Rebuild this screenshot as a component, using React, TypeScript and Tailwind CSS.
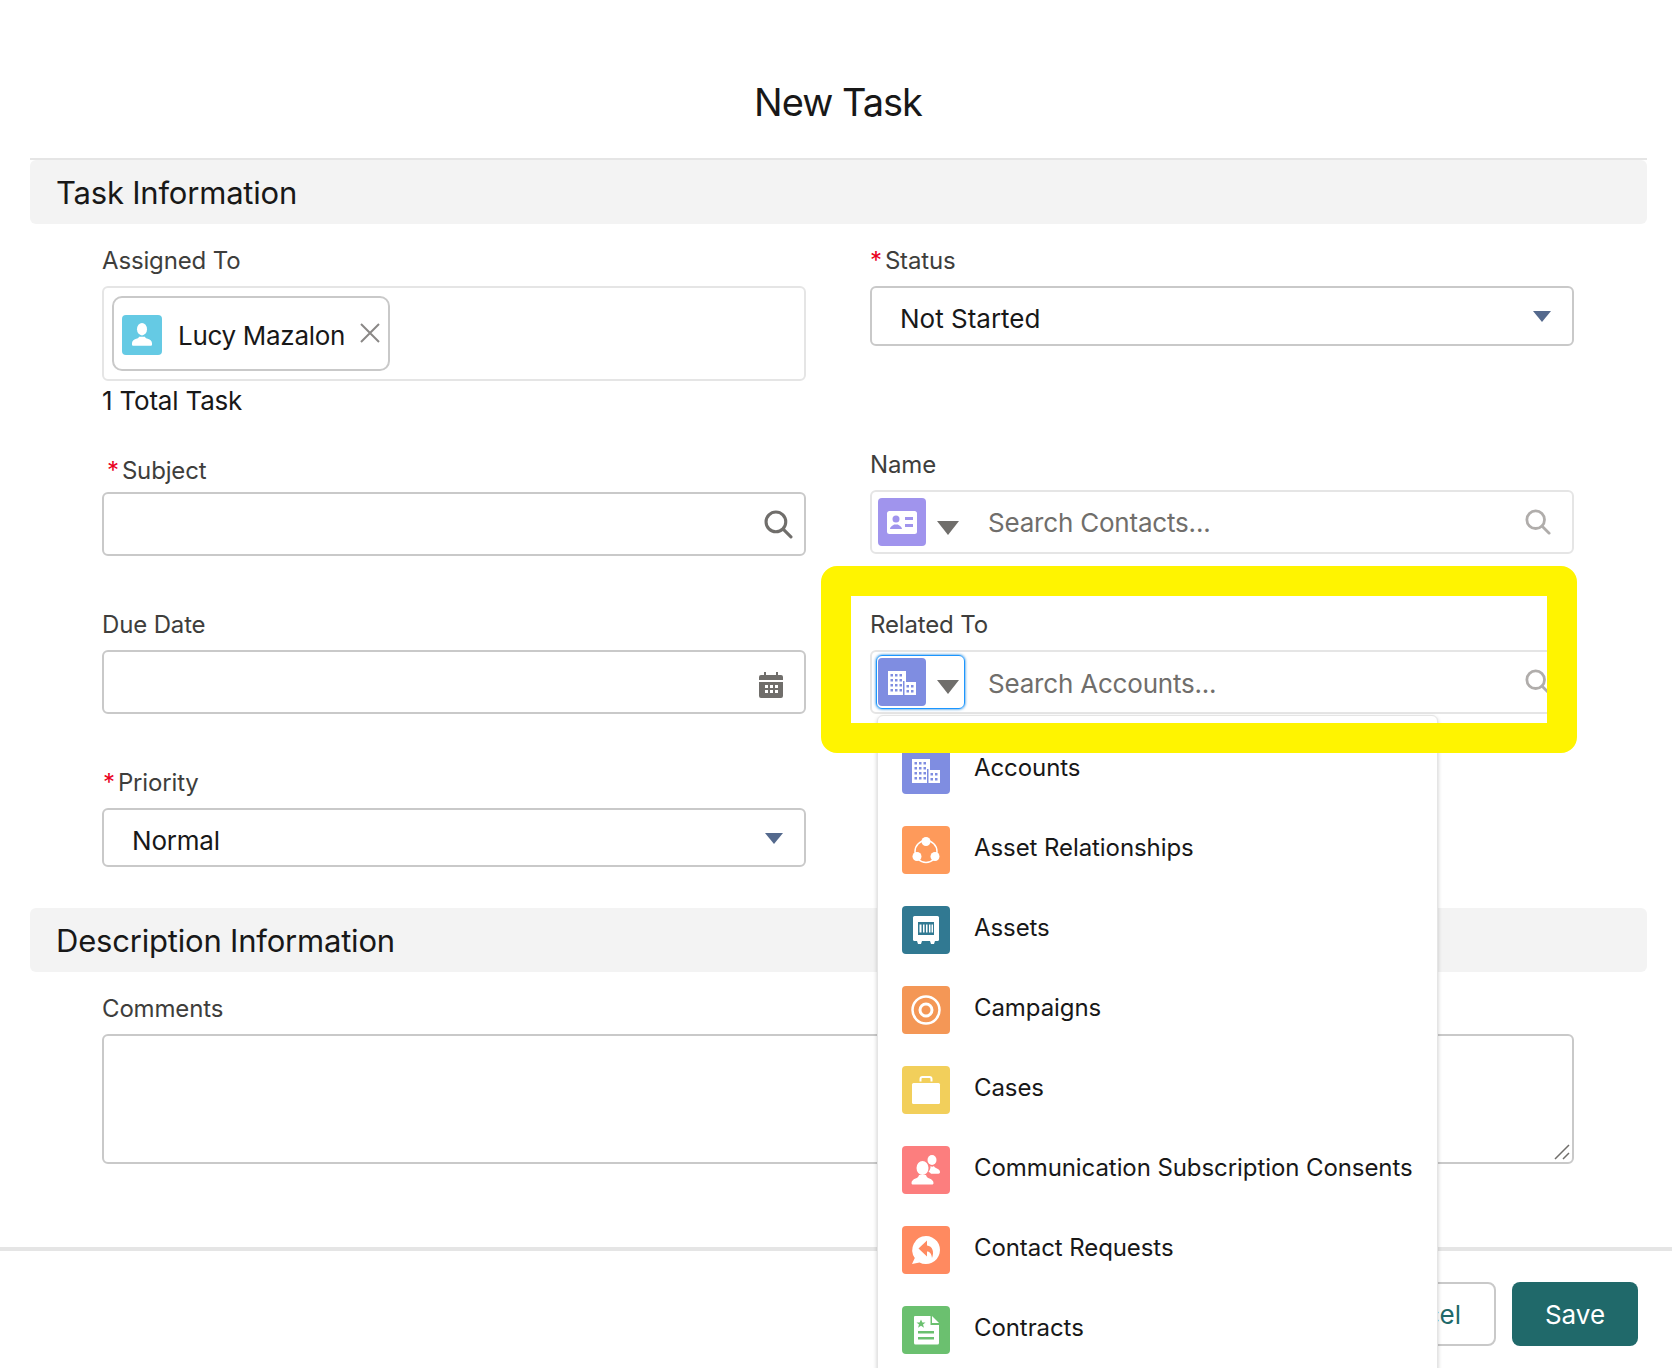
import React from "react";

const Tile: React.FC<{ color: string; size?: string; children: React.ReactNode }> = ({
  color,
  size = "w-12 h-12",
  children,
}) => (
  <svg viewBox="0 0 48 48" className={`${size} shrink-0 rounded-[4px]`} style={{ backgroundColor: color }}>
    {children}
  </svg>
);

const AccountIcon = () => (
  <>
    <path d="M10 13h18v24H10z" fill="#fff" />
    <path d="M26 24h12v13H26z" fill="#fff" />
    <path
      d="M12.500 16h2.500v2.500h-2.500zM17 16h2.500v2.500H17zM21.500 16H24v2.500h-2.500zM12.500 21h2.500v2.500h-2.500zM17 21h2.500v2.500H17zM21.500 21H24v2.500h-2.500zM12.500 26h2.500v2.500h-2.500zM17 26h2.500v2.500H17zM21.500 26H24v2.500h-2.500zM12.500 31h2.500v2.500h-2.500zM17 31h2.500v2.500H17zM21.500 31H24v2.500h-2.500zM28.500 27H31v2.500h-2.500zM33 27h2.500v2.500H33zM28.500 32H31v2.500h-2.500zM33 32h2.500v2.500H33z"
      fill="#7f8de1"
    />
    <path d="M25 23h1.500v15H25z" fill="#7f8de1" />
  </>
);

const RelationIcon = () => (
  <>
    <circle cx="24" cy="25.500" r="11" fill="none" stroke="#fff" strokeWidth="1.500" />
    <circle cx="24" cy="15.500" r="4.500" fill="#fff" />
    <circle cx="15" cy="30.500" r="4.500" fill="#fff" />
    <circle cx="33" cy="30.500" r="4.500" fill="#fff" />
  </>
);

const AssetIcon = () => (
  <>
    <rect x="11" y="10" width="26" height="25" rx="1.500" fill="#fff" />
    <path d="M15 35h5l-1 3h-3zM28 35h5l-1 3h-3z" fill="#fff" />
    <path d="M16 16h16v13H16z" fill="#317992" />
    <path d="M17.500 18.500h2v8h-2zM21 18.500h1.500v8H21zM24 18.500h1.500v8H24zM27 18.500h1.500v8H27zM29.500 18.500H31v8h-1.500z" fill="#fff" />
  </>
);

const CampaignIcon = () => (
  <>
    <circle cx="24" cy="24" r="13.500" fill="none" stroke="#fff" strokeWidth="2.500" />
    <circle cx="24" cy="24" r="6" fill="none" stroke="#fff" strokeWidth="3" />
  </>
);

const CaseIcon = () => (
  <>
    <rect x="10" y="17" width="28" height="21" rx="1.500" fill="#fff" />
    <path d="M18.500 15.500v-2.500a2 2 0 0 1 2-2h7a2 2 0 0 1 2 2v2.500" fill="none" stroke="#fff" strokeWidth="2" />
  </>
);

const ConsentIcon = () => (
  <>
    <ellipse cx="20.500" cy="22" rx="6" ry="7" fill="#fff" />
    <path d="M9.500 37c0-2 1.500-3.500 4-4.500 2-.8 3-1.500 3.500-3.500h7c.5 2 1.500 2.700 3.500 3.500 2.500 1 4 2.500 4 4.500 0 1-.7 1.500-1.500 1.500H11c-.8 0-1.500-.5-1.500-1.500z" fill="#fff" />
    <ellipse cx="30" cy="14" rx="4.500" ry="5" fill="#fff" />
    <path d="M28.500 20c1 1 2.500 1 3.500 0 .3 1 1 1.600 2.500 2.200 2 .8 3.500 2 3.500 3.800 0 1-.6 1.700-1.500 1.700h-7.500c-.5-.8-1.200-1.400-2.500-2 1.500-1.500 2.200-3.500 2-5.700z" fill="#fff" />
  </>
);

const RequestIcon = () => (
  <>
    <path d="M24 10a14 14 0 1 1-6.500 26.400L10 38l2.800-6A14 14 0 0 1 24 10z" fill="#fff" />
    <path d="M25 14.500l-8.500 8 8.500 8v-5c3 0 4.500 2.500 5 6.500 2.500-6 .5-12-5-12.500z" fill="#ff8a60" />
  </>
);

const ContractIcon = () => (
  <>
    <path d="M13 10h15.500v9H37v18a1.500 1.500 0 0 1-1.500 1.500h-22A1.500 1.500 0 0 1 12 37V11a1 1 0 0 1 1-1z" fill="#fff" />
    <path d="M30 10l7 7h-7z" fill="#fff" />
    <path d="M19 13.500l1.400 3h3.100l-2.500 2 1 3.200-3-1.900-3 1.900 1-3.200-2.500-2h3.100z" fill="#6bc06f" />
    <path d="M16 25h16v2.500H16zM16 31h16v2.500H16z" fill="#6bc06f" />
  </>
);

const PersonIcon = () => (
  <>
    <ellipse cx="24" cy="17" rx="6" ry="7.500" fill="#fff" />
    <path d="M12 34c0-3 2-4.500 5-5.500 2-.7 3-1.200 3.500-2.500h7c.5 1.300 1.500 1.800 3.500 2.500 3 1 5 2.500 5 5.500v1.500c0 1-.7 1.500-1.500 1.500h-21c-.8 0-1.500-.5-1.500-1.500z" fill="#fff" />
  </>
);

const ContactIcon = () => (
  <>
    <rect x="9" y="13" width="30" height="23" rx="2.500" fill="#fff" />
    <circle cx="18" cy="21" r="3.500" fill="#a094ed" />
    <path d="M12 31c0-2.500 3-3.500 4-4.500h4c1 1 4 2 4 4.500z" fill="#a094ed" />
    <path d="M27 19h8v3h-8zM27 26h8v3h-8z" fill="#a094ed" />
  </>
);

const SearchIcon: React.FC<{ className: string; color: string }> = ({ className, color }) => (
  <svg viewBox="0 0 28 28" className={className} fill="none" stroke={color} strokeWidth="3">
    <circle cx="11.500" cy="11.500" r="9.500" />
    <path d="M18.500 18.500L26 26" strokeLinecap="round" />
  </svg>
);

const SelectArrow = () => <div className="w-0 h-0 border-x-[9px] border-x-transparent border-t-[11px] border-t-[#54698d]" />;
const GrayArrow = () => <div className="w-0 h-0 border-x-[11px] border-x-transparent border-t-[14px] border-t-[#706e6b]" />;

const Label: React.FC<{ text: string; required?: boolean; className?: string }> = ({ text, required, className = "" }) => (
  <div className={`flex items-center h-[30px] text-[24px] leading-[30px] tracking-[-0.15px] text-[#3e3e3c] ${className}`}>
    {required && <span className="text-[#ea001e] mr-[3px] ml-[1px]">*</span>}
    {text}
  </div>
);

const SectionHeader: React.FC<{ title: string }> = ({ title }) => (
  <div className="h-[64px] rounded-[6px] bg-[#f3f3f3] px-[26px] pt-[2px] flex items-center text-[31px] tracking-[-0.2px] text-[#181818]">{title}</div>
);

const accountsTile = "#7f8de1";

const objects: { name: string; color: string; icon: React.ReactNode }[] = [
  { name: "Accounts", color: accountsTile, icon: <AccountIcon /> },
  { name: "Asset Relationships", color: "#fe9a5b", icon: <RelationIcon /> },
  { name: "Assets", color: "#317992", icon: <AssetIcon /> },
  { name: "Campaigns", color: "#f49756", icon: <CampaignIcon /> },
  { name: "Cases", color: "#f2cf5b", icon: <CaseIcon /> },
  { name: "Communication Subscription Consents", color: "#fc7e7e", icon: <ConsentIcon /> },
  { name: "Contact Requests", color: "#ff8a60", icon: <RequestIcon /> },
  { name: "Contracts", color: "#6bc06f", icon: <ContractIcon /> },
];

export default function App() {
  return (
    <div className="w-[1672px] h-[1368px] overflow-hidden bg-white font-['Inter',sans-serif] text-[#181818]">
      <div className="h-[158px] pt-[74px] pl-[4px] text-center text-[38px] tracking-[-1px] leading-[56px]">New Task</div>

      <div className="mx-[30px] w-[1617px]">
        <div className="border-t-2 border-[#e5e5e5]">
          <SectionHeader title="Task Information" />
        </div>

        <div className="flex pl-[72px] gap-[64px] pt-[22px]">
          <div className="w-[704px] flex flex-col">
            <Label text="Assigned To" />
            <div className="mt-[10px] h-[95px] rounded-[6px] border-2 border-[#e5e5e5] pt-[8px] pl-[8px]">
              <div className="w-[278px] h-[75px] rounded-[10px] border-2 border-[#c9c9c9] flex items-center pl-[8px] relative">
                <span className="mt-[2px]">
                  <Tile color="#65cae4" size="w-10 h-10">
                    <PersonIcon />
                  </Tile>
                </span>
                <span className="ml-[16px] mt-[4px] text-[26px] tracking-[-0.3px]">Lucy Mazalon</span>
                <svg viewBox="0 0 20 20" className="absolute left-[246px] top-[25px] w-5 h-5" stroke="#8a8886" strokeWidth="2" fill="none">
                  <path d="M1 1l18 18M19 1L1 19" />
                </svg>
              </div>
            </div>
            <div className="mt-[5px] text-[26px] leading-[30px] tracking-[-0.2px]">1 Total Task</div>

            <Label text="Subject" required className="mt-[40px] pl-[4px]" />
            <div className="mt-[6px] h-[64px] rounded-[6px] border-2 border-[#c9c9c9] flex items-center justify-end pr-[11px]">
              <SearchIcon className="w-[29px] h-[29px]" color="#706e6b" />
            </div>

            <Label text="Due Date" className="mt-[54px]" />
            <div className="mt-[10px] h-[64px] rounded-[6px] border-2 border-[#c9c9c9] flex items-center justify-end pr-[21px]">
              <svg viewBox="0 0 24 26" className="w-6 h-[26px] mt-[6px]" fill="#706e6b">
                <path d="M5 0h2v3H5zM17 0h2v3h-2zM2 3h20a2 2 0 0 1 2 2v3H0V5a2 2 0 0 1 2-2z" />
                <path
                  fillRule="evenodd"
                  d="M0 10h24v14a2 2 0 0 1-2 2H2a2 2 0 0 1-2-2zM6 13h3v3H6zM11 13h3v3h-3zM16 13h3v3h-3zM6 18h3v3H6zM11 18h3v3h-3zM16 18h3v3h-3z"
                />
              </svg>
            </div>

            <Label text="Priority" required className="mt-[54px]" />
            <div className="mt-[10px] h-[59px] rounded-[6px] border-2 border-[#c9c9c9] flex items-center justify-between pl-[28px] pr-[21px]">
              <span className="text-[26px] mt-[6px] tracking-[-0.2px]">Normal</span>
              <span className="mt-[1px]">
                <SelectArrow />
              </span>
            </div>
          </div>

          <div className="w-[704px] flex flex-col">
            <Label text="Status" required className="-ml-[1px]" />
            <div className="mt-[10px] h-[60px] rounded-[6px] border-2 border-[#c9c9c9] flex items-center justify-between pl-[28px] pr-[21px]">
              <span className="text-[26px] mt-[5px]">Not Started</span>
              <span>
                <SelectArrow />
              </span>
            </div>

            <Label text="Name" className="mt-[104px]" />
            <div className="mt-[10px] h-[64px] rounded-[6px] border-2 border-[#e5e5e5] flex items-center pl-[6px] pr-[21px]">
              <Tile color="#a094ed">
                <ContactIcon />
              </Tile>
              <span className="ml-[11px] mt-[12px]">
                <GrayArrow />
              </span>
              <span className="ml-[29px] text-[26px] tracking-[-0.2px] text-[#706e6b] flex-1">Search Contacts...</span>
              <SearchIcon className="w-[26px] h-[26px]" color="#b0adab" />
            </div>

            <div className="relative mt-[56px]">
              <Label text="Related To" />
              <div className="mt-[10px] h-[64px] rounded-[6px] border-2 border-[#e5e5e5] flex items-center pl-[4px] pr-[21px]">
                <div className="w-[89px] h-[54px] rounded-[6px] border border-[#1b96ff] shadow-[0_0_3px_#0176d3] flex items-center pl-[1px]">
                  <Tile color={accountsTile}>
                    <AccountIcon />
                  </Tile>
                  <span className="ml-[11px] mt-[10px]">
                    <GrayArrow />
                  </span>
                </div>
                <span className="ml-[23px] mt-[2px] text-[26px] tracking-[-0.2px] text-[#706e6b] flex-1">Search Accounts...</span>
                <SearchIcon className="w-[26px] h-[26px]" color="#b0adab" />
              </div>

              <div className="absolute left-[7px] top-[105px] w-[561px] h-[700px] rounded-[6px] border border-[#e5e5e5] bg-white shadow-[0_2px_4px_rgba(0,0,0,0.2)] pt-[30px] pl-[24px] flex flex-col gap-[32px] z-10">
                {objects.map((o) => (
                  <div key={o.name} className="flex items-center gap-[24px]">
                    <Tile color={o.color}>{o.icon}</Tile>
                    <span className="text-[24px] leading-[30px] -mt-[4px] whitespace-nowrap tracking-[-0.08px]">{o.name}</span>
                  </div>
                ))}
              </div>

              <div className="absolute -left-[49px] -top-[44px] w-[756px] h-[187px] rounded-[16px] border-[30px] border-[#fff400] z-20" />
            </div>
          </div>
        </div>

        <div className="mt-[41px]">
          <SectionHeader title="Description Information" />
        </div>
        <div className="pl-[72px] pr-[73px] pt-[22px]">
          <Label text="Comments" />
          <div className="relative mt-[10px] h-[130px] rounded-[6px] border-2 border-[#c9c9c9]">
            <svg viewBox="0 0 16 16" className="absolute right-[2px] bottom-[2px] w-4 h-4" stroke="#706e6b" strokeWidth="1.500">
              <path d="M1 15L15 1M9 15l6-6" />
            </svg>
          </div>
        </div>
      </div>

      <div className="mt-[83px] border-t-4 border-[#e5e5e5] pt-[31px] pr-[34px] flex justify-end gap-[16px]">
        <div className="h-[64px] w-[150px] rounded-[8px] border-2 border-[#c9c9c9] flex items-center justify-end pr-[33px] text-[26px] text-[#20696a]">Cancel</div>
        <div className="h-[64px] w-[126px] rounded-[8px] bg-[#20696a] flex items-center justify-center text-[26px] text-white">Save</div>
      </div>
    </div>
  );
}
